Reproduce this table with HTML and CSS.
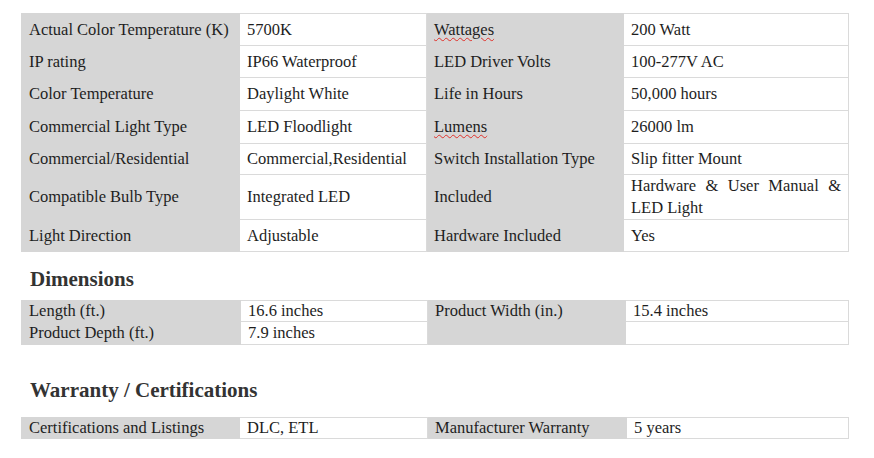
FILE: index.html
```html
<!DOCTYPE html>
<html>
<head>
<meta charset="utf-8">
<link rel="stylesheet" href="styles.css">
</head>
<body>
<div class="page">
  <table class="spec spec-main">
    <colgroup><col class="c1"><col class="c2"><col class="c3"><col class="c4"></colgroup>
    <tr><td class="k">Actual Color Temperature (K)</td><td class="v">5700K</td><td class="k"><span class="sq">Wattages</span></td><td class="v">200 Watt</td></tr>
    <tr><td class="k">IP rating</td><td class="v">IP66 Waterproof</td><td class="k">LED Driver Volts</td><td class="v">100-277V AC</td></tr>
    <tr class="r33"><td class="k">Color Temperature</td><td class="v">Daylight White</td><td class="k">Life in Hours</td><td class="v">50,000 hours</td></tr>
    <tr class="r33"><td class="k">Commercial Light Type</td><td class="v">LED Floodlight</td><td class="k"><span class="sq">Lumens</span></td><td class="v">26000 lm</td></tr>
    <tr class="r31"><td class="k">Commercial/Residential</td><td class="v">Commercial,Residential</td><td class="k">Switch Installation Type</td><td class="v">Slip fitter Mount</td></tr>
    <tr class="r44"><td class="k">Compatible Bulb Type</td><td class="v">Integrated LED</td><td class="k">Included</td><td class="v just">Hardware &amp; User Manual &amp; LED Light</td></tr>
    <tr><td class="k">Light Direction</td><td class="v">Adjustable</td><td class="k">Hardware Included</td><td class="v">Yes</td></tr>
  </table>

  <h2 class="heading h-dim">Dimensions</h2>
  <table class="spec spec-small">
    <colgroup><col class="d1"><col class="d2"><col class="d3"><col class="d4"></colgroup>
    <tr class="r22"><td class="k">Length (ft.)</td><td class="v">16.6 inches</td><td class="k">Product Width (in.)</td><td class="v">15.4 inches</td></tr>
    <tr class="r23"><td class="k">Product Depth (ft.)</td><td class="v">7.9 inches</td><td class="k"></td><td class="v"></td></tr>
  </table>

  <h2 class="heading h-war">Warranty / Certifications</h2>
  <table class="spec spec-small">
    <colgroup><col class="w1"><col class="w2"><col class="w3"><col class="w4"></colgroup>
    <tr class="r22"><td class="k">Certifications and Listings</td><td class="v">DLC, ETL</td><td class="k">Manufacturer Warranty</td><td class="v">5 years</td></tr>
  </table>
</div>
</body>
</html>
```

FILE: styles.css
```css
html, body {
  margin: 0;
  padding: 0;
  background: #ffffff;
}
body {
  font-family: "Liberation Serif", "Times New Roman", serif;
  color: #1e1e1e;
  font-size: 16.5px;
}
.page {
  padding: 13px 26px 0 21px;
}
.spec {
  width: 827px;
  border-collapse: collapse;
  table-layout: fixed;
}
.spec td {
  padding: 0 7px;
  height: 31px;
  vertical-align: middle;
  line-height: 22px;
  white-space: nowrap;
  border: 1px solid #dadada;
}
.spec td.k {
  background: #d6d6d6;
  border-color: #d6d6d6;
}
.spec td.v {
  background: #ffffff;
}
.spec td.just {
  white-space: normal;
  text-align: justify;
  text-align-last: left;
}
.spec .r33 td { height: 32px; }
.spec .r31 td { height: 30px; }
.spec .r44 td { height: 42px; }
.spec .r22 td { height: 20px; }
.spec .r23 td { height: 22px; }
.spec-small td { line-height: 20px; }

.c1 { width: 218px; }
.c2 { width: 187px; }
.c3 { width: 197px; }
.c4 { width: 225px; }

.d1 { width: 219px; }
.d2 { width: 187px; }
.d3 { width: 198px; }
.d4 { width: 223px; }

.w1 { width: 218px; }
.w2 { width: 188px; }
.w3 { width: 199px; }
.w4 { width: 222px; }

.sq {
  text-decoration: underline wavy #e0302a;
  text-decoration-thickness: 1px;
  text-underline-offset: 2px;
}

.heading {
  margin: 0;
  padding-left: 9px;
  font-size: 21px;
  font-weight: bold;
  color: #333333;
  line-height: 24px;
}
.h-dim {
  padding-top: 15px;
  padding-bottom: 9px;
}
.h-war {
  padding-top: 33px;
  padding-bottom: 15px;
}
```
